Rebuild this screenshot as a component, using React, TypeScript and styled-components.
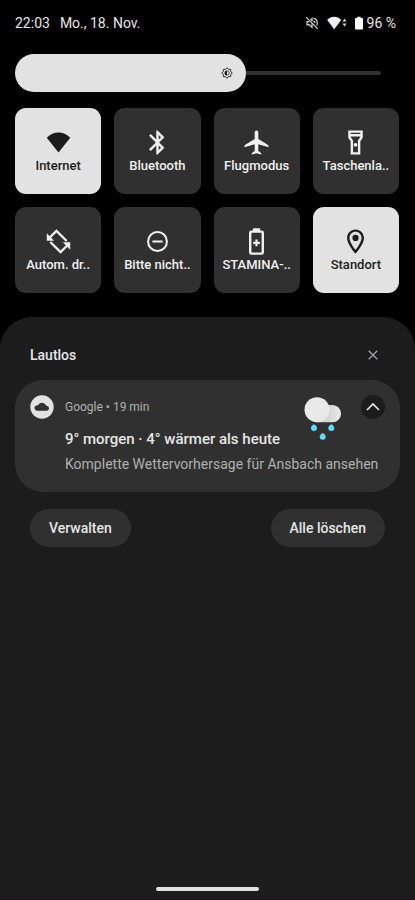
import React, { useState } from "react";
import styled, { createGlobalStyle } from "styled-components";

const color = {
  light: "#e2e2e2",
  card: "#303030",
  sheet: "#1c1c1c",
  text: "#e6e6e6",
  muted: "#b0b0b0",
};

const GlobalStyle = createGlobalStyle`
  *, *::before, *::after { box-sizing: border-box; }
  body {
    margin: 0;
    background: #000;
    color: ${color.text};
    font-family: Roboto, "Liberation Sans", sans-serif;
  }
  button { font: inherit; color: inherit; border: 0; padding: 0; cursor: pointer; }
  h1, h2, p { margin: 0; }
  svg { display: block; flex: none; }
`;

const Screen = styled.div`
  min-height: 100vh;
  display: flex;
  flex-direction: column;
`;

const StatusBar = styled.header`
  display: flex;
  align-items: center;
  justify-content: space-between;
  padding: 13px 19px 0 15px;
  font-size: 14px;
  line-height: 20px;
`;

const StatusGroup = styled.div<{ $gap: number }>`
  display: flex;
  align-items: center;
  gap: ${(p) => p.$gap}px;
`;

const BatteryLevel = styled.div`
  display: flex;
  align-items: center;
  gap: 4px;
`;

const Brightness = styled.label`
  position: relative;
  display: flex;
  align-items: center;
  height: 38px;
  margin: 21px 34px 0 15px;
`;

const BrightnessFill = styled.span`
  display: flex;
  align-items: center;
  justify-content: flex-end;
  height: 38px;
  padding-right: 13px;
  border-radius: 19px;
  background: ${color.light};
`;

const BrightnessRest = styled.span`
  flex: 1;
  height: 4px;
  border-radius: 0 2px 2px 0;
  background: ${color.card};
`;

const BrightnessInput = styled.input`
  position: absolute;
  inset: 0;
  width: 100%;
  height: 100%;
  margin: 0;
  opacity: 0;
  cursor: pointer;
`;

const TileGrid = styled.main`
  display: grid;
  grid-template-columns: repeat(4, 1fr);
  gap: 13px;
  padding: 16px 16px 24px 15px;
`;

const Tile = styled.button<{ $active: boolean }>`
  display: flex;
  flex-direction: column;
  align-items: center;
  height: 86px;
  padding-top: 20px;
  border-radius: 11px;
  background: ${(p) => (p.$active ? color.light : color.card)};
  color: ${(p) => (p.$active ? "#1c1c1c" : "#f0f0f0")};
`;

const TileLabel = styled.span`
  font-size: 13px;
  font-weight: 500;
  line-height: 18px;
  white-space: nowrap;
`;

const Sheet = styled.section`
  flex: 1;
  display: flex;
  flex-direction: column;
  padding: 25px 15px 0;
  border-radius: 32px 32px 0 0;
  border-bottom: 1px solid #120d14;
  background: ${color.sheet};
`;

const SheetHeader = styled.div`
  display: flex;
  align-items: center;
  justify-content: space-between;
  padding: 0 15px;
  height: 26px;
`;

const SheetTitle = styled.h1`
  font-size: 14px;
  font-weight: 500;
  line-height: 20px;
`;

const ClearButton = styled.button`
  display: grid;
  place-items: center;
  width: 24px;
  height: 24px;
  background: none;
  color: #a4a4aa;
`;

const Card = styled.article`
  display: grid;
  grid-template-columns: 24px 1fr 38px 24px;
  grid-template-rows: 24px 25px 20px;
  row-gap: 5px;
  align-items: center;
  margin-top: 12px;
  padding: 15px 15px 18px;
  border-radius: 28px;
  background: ${color.card};
`;

const Meta = styled.p`
  padding-left: 11px;
  font-size: 12px;
  line-height: 16px;
  color: ${color.muted};
`;

const CardTitle = styled.h2`
  grid-column: 2;
  grid-row: 2;
  align-self: end;
  padding-left: 11px;
  font-size: 15px;
  font-weight: 500;
  line-height: 20px;
  white-space: nowrap;
`;

const CardText = styled.p`
  grid-column: 2 / 5;
  grid-row: 3;
  padding-left: 11px;
  font-size: 14px;
  line-height: 20px;
  color: ${color.muted};
  white-space: nowrap;
`;

const WeatherSlot = styled.div`
  grid-column: 3;
  grid-row: 1 / 3;
  align-self: start;
  display: flex;
  justify-content: flex-end;
  margin-right: 19px;
`;

const CollapseButton = styled.button`
  grid-column: 4;
  grid-row: 1;
  display: grid;
  place-items: center;
  width: 24px;
  height: 24px;
  border-radius: 50%;
  background: ${color.sheet};
`;

const Actions = styled.div`
  display: flex;
  justify-content: space-between;
  padding: 17px 15px 0;
`;

const PillButton = styled.button`
  height: 38px;
  padding: 0 19px;
  border-radius: 19px;
  background: ${color.card};
  font-size: 14px;
  font-weight: 500;
`;

const HomeIndicator = styled.div`
  align-self: center;
  width: 27%;
  height: 4px;
  margin: auto 0 8px;
  border-radius: 2px;
  background: ${color.light};
`;

const MuteIcon = () => (
  <svg width="14" height="14" viewBox="0 0 24 24" fill="none" stroke="#cccccc" strokeWidth="2.2">
    <path d="M2 2l20 20" />
    <path d="M12 9V4.5L9.5 7M7.5 9.5H3.5v5.5H7l5 4.5v-7" />
    <path d="M14.5 3.5c4 1 6.5 4.500 6.500 8.500 0 1.500-.4 3-1.100 4.300M14.500 8c1.700.8 2.500 2.300 2.500 4" />
  </svg>
);

const StatusWifiIcon = () => (
  <svg width="20" height="14" viewBox="0 0 20 14">
    <path d="M7.200 13.200L.2 4C4.200-.2 10.200-.2 14.200 4z" fill="#eef0f8" />
    <path d="M17.500 2.500l2 3h-4zM17.500 10.500l2-3h-4z" fill="#d8d8dc" />
  </svg>
);

const BatteryIcon = () => (
  <svg width="8" height="14" viewBox="0 0 8 14" fill="#fff">
    <path d="M2.300.8h3.400V2H7a1 1 0 0 1 1 1v9.600a1 1 0 0 1-1 1H1a1 1 0 0 1-1-1V3a1 1 0 0 1 1-1h1.300z" />
  </svg>
);

const BrightnessIcon = () => (
  <svg width="12" height="12" viewBox="0 0 24 24" fill="none" stroke="#1c1c1c" strokeWidth="1.800">
    <path
      d="M12 1.500l3 3.200h4.300V9l3.200 3-3.200 3v4.300H15l-3 3.200-3-3.200H4.700V15l-3.200-3 3.200-3V4.700H9z"
      strokeLinejoin="round"
    />
    <path d="M12 7.500a4.500 4.500 0 0 1 0 9" strokeWidth="1.300" />
    <path d="M12 7a5 5 0 0 0 0 10z" fill="#1c1c1c" stroke="none" />
  </svg>
);

const TileIcon = ({ children }: { children: React.ReactNode }) => (
  <svg width="29" height="29" viewBox="0 0 24 24" fill="currentColor" aria-hidden="true">
    {children}
  </svg>
);

const icons = {
  wifi: <path d="M12 20.200L2.300 8.100C7.700 2.300 16.300 2.300 21.700 8.100z" />,
  bluetooth: (
    <path d="M17.710 7.710L12 2h-1v7.590L6.410 5 5 6.410 10.590 12 5 17.590 6.410 19 11 14.410V22h1l5.710-5.710-4.300-4.290 4.300-4.290zM13 5.830l1.880 1.880L13 9.590V5.830zm1.880 10.460L13 18.170v-3.760l1.880 1.880z" />
  ),
  plane: (
    <path d="M22 15.300c0-.8-.3-1.300-1-1.700L13.500 9V3.500C13.500 2.670 12.830 2 12 2s-1.500.67-1.500 1.500V9L3 13.600c-.7.4-1 .9-1 1.700v.7l8.500-2.500V19l-1.800 1.200c-.5.400-.7.700-.7 1.300v.4l4-1 4 1v-.4c0-.6-.2-.9-.7-1.300L13.500 19v-5.500L22 16z" />
  ),
  flashlight: (
    <>
      <path d="M18 2H6v6l2 3v11h8V11l2-3V2zm-2 2v1H8V4h8zm-2 6.400V20h-4v-9.600l-2-3V7h8v.4l-2 3z" />
      <circle cx="12" cy="14" r="1.500" />
    </>
  ),
  rotate: (
    <>
      <path
        d="M18.800 11.600L10.300 3.200L5 8.500M5.200 12.400L13.700 20.800L19 15.500"
        fill="none"
        stroke="currentColor"
        strokeWidth="1.900"
      />
      <path d="M2.300 5.200V11.300H8.400zM21.700 18.800V12.700H15.600z" />
    </>
  ),
  dnd: (
    <g fill="none" stroke="currentColor" strokeWidth="1.700">
      <circle cx="12" cy="12" r="7.800" />
      <path d="M7.800 12h8.400" />
    </g>
  ),
  stamina: (
    <>
      <path d="M9 1h6v3H9zM11.100 10.300h1.800v1.900h1.900V14h-1.900v1.900h-1.800V14H9.200v-1.800h1.900z" />
      <rect x="6.800" y="3.800" width="10.400" height="18.200" rx="1" fill="none" stroke="currentColor" strokeWidth="2" />
    </>
  ),
  pin: (
    <>
      <path d="M12 2C8.130 2 5 5.130 5 9c0 5.250 7 13 7 13s7-7.750 7-13c0-3.870-3.130-7-7-7zM7 9c0-2.760 2.240-5 5-5s5 2.240 5 5c0 2.880-2.880 7.190-5 9.880C9.920 16.210 7 11.850 7 9z" />
      <circle cx="12" cy="9" r="2.600" />
    </>
  ),
};

const CloudBadge = () => (
  <svg width="24" height="24" viewBox="0 0 24 24" aria-hidden="true">
    <circle cx="12" cy="12" r="11.700" fill="#e2e2e2" />
    <path
      d="M7.300 15.800a2.600 2.600 0 0 1-.3-5.200c.6-.1 1-.2 1.300-.8a4.300 4.300 0 0 1 7.500.3c.3.600.7.700 1.300.8a2.500 2.500 0 0 1-.2 4.900z"
      fill="#303030"
    />
  </svg>
);

const RainIcon = () => (
  <svg width="38" height="46" viewBox="0 0 38 46" role="img" aria-label="Regen">
    <defs>
      <linearGradient id="cloudShade" x1="0" x2="1" y1="0" y2="0">
        <stop offset="0.500" stopColor="#d6d6d6" />
        <stop offset="1" stopColor="#ececec" />
      </linearGradient>
    </defs>
    <path d="M13 10h15.500a8.600 8.600 0 0 1 0 17.200H13z" fill="url(#cloudShade)" />
    <circle cx="13" cy="14.700" r="12.500" fill="#e9e9e9" />
    <g fill="#5fdcfa">
      <path d="M10 29.300c1.900 1.100 3 2.400 3 3.800a3 3 0 0 1-6 0c0-1.400 1.100-2.700 3-3.800z" />
      <path d="M27.300 29.300c1.900 1.100 3 2.400 3 3.800a3 3 0 0 1-6 0c0-1.400 1.100-2.700 3-3.800z" />
      <path d="M18.700 38c1.900 1.100 3 2.400 3 3.800a3 3 0 0 1-6 0c0-1.400 1.100-2.700 3-3.800z" />
    </g>
  </svg>
);

const initialTiles: { label: string; icon: keyof typeof icons; active: boolean }[] = [
  { label: "Internet", icon: "wifi", active: true },
  { label: "Bluetooth", icon: "bluetooth", active: false },
  { label: "Flugmodus", icon: "plane", active: false },
  { label: "Taschenla..", icon: "flashlight", active: false },
  { label: "Autom. dr..", icon: "rotate", active: false },
  { label: "Bitte nicht..", icon: "dnd", active: false },
  { label: "STAMINA-..", icon: "stamina", active: false },
  { label: "Standort", icon: "pin", active: true },
];

export default function App() {
  const [tiles, setTiles] = useState(initialTiles);
  const [level, setLevel] = useState(63);

  const toggle = (index: number) =>
    setTiles(tiles.map((t, i) => (i === index ? { ...t, active: !t.active } : t)));

  return (
    <>
      <GlobalStyle />
      <Screen>
        <StatusBar>
          <StatusGroup $gap={10}>
            <time>22:03</time>
            <span>Mo., 18. Nov.</span>
          </StatusGroup>
          <StatusGroup $gap={8}>
            <MuteIcon />
            <StatusWifiIcon />
            <BatteryLevel>
              <BatteryIcon />
              <span>96 %</span>
            </BatteryLevel>
          </StatusGroup>
        </StatusBar>

        <Brightness>
          <BrightnessFill style={{ width: `${level}%` }}>
            <BrightnessIcon />
          </BrightnessFill>
          <BrightnessRest />
          <BrightnessInput
            type="range"
            min={12}
            max={100}
            value={level}
            aria-label="Helligkeit"
            onChange={(e) => setLevel(Number(e.target.value))}
          />
        </Brightness>

        <TileGrid>
          {tiles.map((tile, index) => (
            <Tile
              key={tile.label}
              type="button"
              $active={tile.active}
              aria-pressed={tile.active}
              onClick={() => toggle(index)}
            >
              <TileIcon>{icons[tile.icon]}</TileIcon>
              <TileLabel>{tile.label}</TileLabel>
            </Tile>
          ))}
        </TileGrid>

        <Sheet>
          <SheetHeader>
            <SheetTitle>Lautlos</SheetTitle>
            <ClearButton type="button" aria-label="Schließen">
              <svg width="10" height="10" viewBox="0 0 10 10" stroke="currentColor" strokeWidth="1.300">
                <path d="M.7.7l8.600 8.600M9.300.7L.7 9.300" />
              </svg>
            </ClearButton>
          </SheetHeader>

          <Card>
            <CloudBadge />
            <Meta>Google • 19 min</Meta>
            <WeatherSlot>
              <RainIcon />
            </WeatherSlot>
            <CollapseButton type="button" aria-label="Minimieren">
              <svg width="14" height="8" viewBox="0 0 14 8" fill="none" stroke="#e6e6e6" strokeWidth="1.700">
                <path d="M1 7l6-6 6 6" />
              </svg>
            </CollapseButton>
            <CardTitle>9° morgen · 4° wärmer als heute</CardTitle>
            <CardText>Komplette Wettervorhersage für Ansbach ansehen</CardText>
          </Card>

          <Actions>
            <PillButton type="button">Verwalten</PillButton>
            <PillButton type="button">Alle löschen</PillButton>
          </Actions>

          <HomeIndicator />
        </Sheet>
      </Screen>
    </>
  );
}
